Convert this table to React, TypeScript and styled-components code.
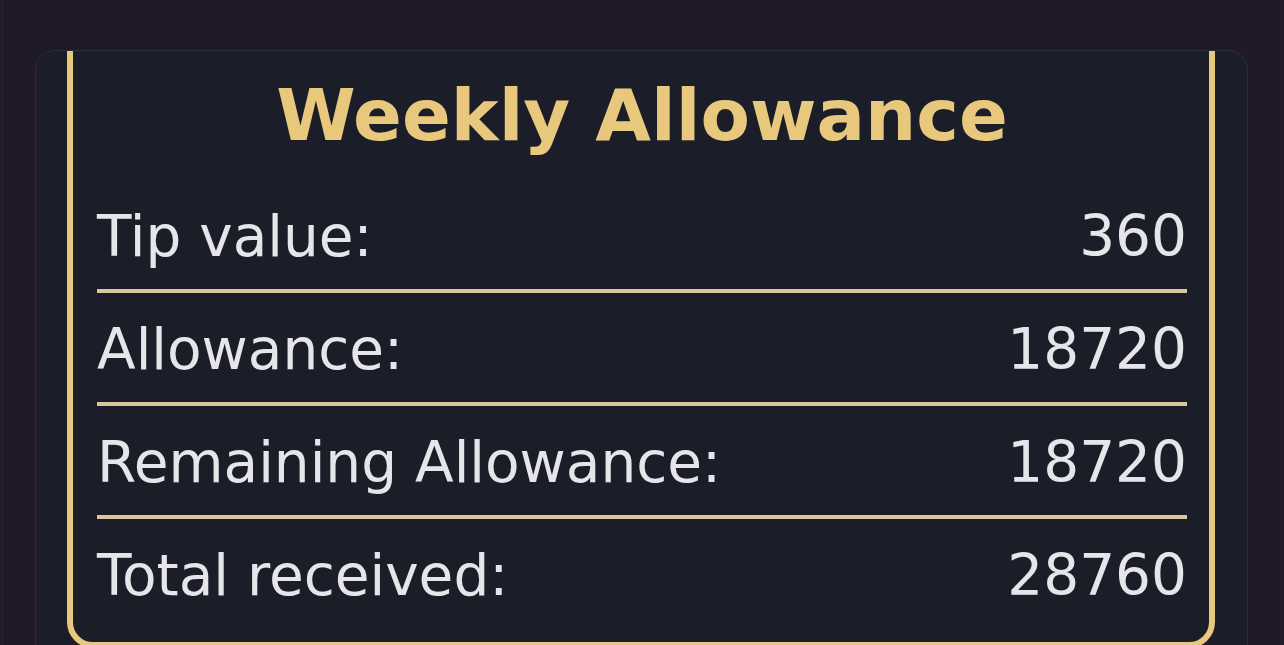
import styled, { createGlobalStyle } from "styled-components";

const GlobalStyle = createGlobalStyle`
    html, body {
        margin: 0;
        padding: 0;
        background-color: #1f1929;
        overflow: hidden;
    }
    body {
        font-family: "DejaVu Sans", "Liberation Sans", sans-serif;
    }
`

const Frame = styled.div`
    height: 645px;
    margin: 0 2px;
    border-left: 1px solid #282234;
    border-right: 1px solid #282234;
    padding: 50px 33px 0 32px;
    box-sizing: border-box;
`

const Card = styled.div`
    height: 700px;
    background-color: #1b1e29;
    border: 1px solid #2b2d3b;
    border-radius: 20px;
    overflow: hidden;
    padding: 0 32px 0 31px;
`

const GoldBox = styled.div`
    margin-top: -40px;
    border: 6px solid #e7c87c;
    border-radius: 26px;
    padding: 56px 22px 34px 24px;
`

const Title = styled.h2`
    margin: 0 0 23px;
    text-align: center;
    color: #e7c87c;
    font-size: 72px;
    font-weight: bold;
    line-height: normal;
`

const Row = styled.div<{ last?: boolean }>`
    display: flex;
    justify-content: space-between;
    align-items: baseline;
    padding: 24px 0 ${props => props.last ? "0" : "20px"};
    border-bottom: ${props => props.last ? "none" : "4px solid #d8c79e"};
    color: #e6e6ea;
    font-size: 56.5px;
    line-height: 65px;
`

const Label = styled.span``

const Value = styled.span``

const rows = [
    { label: "Tip value:", value: 360 },
    { label: "Allowance:", value: 18720 },
    { label: "Remaining Allowance:", value: 18720 },
    { label: "Total received:", value: 28760 },
];

function App() {
    return (
        <>
            <GlobalStyle />
            <Frame>
                <Card>
                    <GoldBox>
                        <Title>Weekly Allowance</Title>
                        {rows.map((row, i) => (
                            <Row key={row.label} last={i === rows.length - 1}>
                                <Label>{row.label}</Label>
                                <Value>{row.value}</Value>
                            </Row>
                        ))}
                    </GoldBox>
                </Card>
            </Frame>
        </>
    );
}

export default App
